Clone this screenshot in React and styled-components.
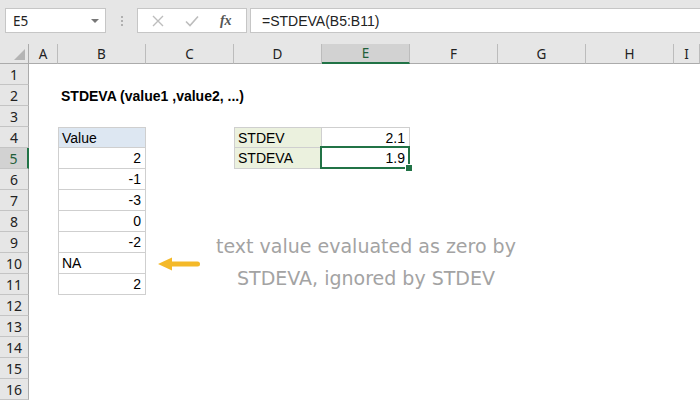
import React from 'react'
import styled, { createGlobalStyle, css } from 'styled-components'

const GlobalStyle = createGlobalStyle`
  html, body {
    margin: 0;
    padding: 0;
    background: #fff;
    overflow: hidden;
  }
  body {
    width: 700px;
    height: 400px;
    font-family: "Liberation Sans", Arial, sans-serif;
  }
`

const Window = styled.div`
  width: 700px;
  height: 400px;
  display: flex;
  flex-direction: column;
  overflow: hidden;
`

const TopBar = styled.div`
  height: 44px;
  box-sizing: border-box;
  padding: 8px 0 11px 5px;
  background: #e6e6e6;
  display: flex;
  align-items: stretch;
`

const NameBox = styled.div`
  width: 101px;
  box-sizing: border-box;
  background: #fff;
  border: 1px solid #c6c6c6;
  display: flex;
  align-items: center;
  justify-content: space-between;
  padding: 0 6px 0 7px;
  font-family: "Noto Sans", sans-serif;
  font-size: 13.5px;
  color: #222;
`

const Caret = styled.span`
  width: 0;
  height: 0;
  border-left: 4px solid transparent;
  border-right: 4px solid transparent;
  border-top: 4px solid #777;
`

const Grip = styled.div`
  width: 31px;
  display: flex;
  flex-direction: column;
  align-items: center;
  justify-content: center;
  gap: 2px;
  span {
    width: 2px;
    height: 2px;
    background: #b0b0b0;
  }
`

const FxButtons = styled.div`
  width: 110px;
  box-sizing: border-box;
  background: #fff;
  border: 1px solid #c6c6c6;
  display: flex;
  align-items: center;
  justify-content: space-around;
  padding: 0 4px;
`

const Fx = styled.span`
  font-family: "Liberation Serif", serif;
  font-style: italic;
  font-weight: bold;
  font-size: 14px;
  color: #555;
`

const FormulaInput = styled.div`
  flex: 1;
  margin-left: 3px;
  background: #fff;
  border: 1px solid #c6c6c6;
  border-right: none;
  display: flex;
  align-items: center;
  padding-left: 11px;
  font-family: "Liberation Sans", Arial, sans-serif;
  font-size: 14px;
  color: #222;
`

const Sheet = styled.div`
  flex: 1;
  display: grid;
  grid-template-columns: 29px 29px repeat(7, 88px) 1fr;
  grid-template-rows: 20px repeat(16, 21px);
  background: #fff;
`

const Corner = styled.div`
  background: #e6e6e6;
  border-right: 1px solid #ababab;
  border-bottom: 1px solid #ababab;
  display: flex;
  align-items: flex-end;
  justify-content: flex-end;
  padding: 0 3px 3px 0;
`

const ColHead = styled.div`
  background: ${p => (p.$active ? '#d2d2d2' : '#e6e6e6')};
  border-right: 1px solid #bcbcbc;
  border-bottom: ${p => (p.$active ? '2px solid #217346' : '1px solid #ababab')};
  display: flex;
  align-items: center;
  justify-content: center;
  font-family: "Noto Sans", sans-serif;
  font-size: 13.5px;
  color: ${p => (p.$active ? '#1f5f3a' : '#222')};
`

const RowHead = styled.div`
  background: ${p => (p.$active ? '#d2d2d2' : '#e6e6e6')};
  border-bottom: 1px solid #c4c4c4;
  border-right: ${p => (p.$active ? '2px solid #217346' : '1px solid #ababab')};
  box-sizing: border-box;
  display: flex;
  align-items: center;
  justify-content: center;
  font-family: "Noto Sans", sans-serif;
  font-size: 14px;
  color: ${p => (p.$active ? '#1f5f3a' : '#222')};
`

const Cell = styled.div`
  position: relative;
  box-sizing: border-box;
  display: flex;
  align-items: center;
  justify-content: ${p => (p.$right ? 'flex-end' : 'flex-start')};
  padding: 0 4px 0 3px;
  font-family: "Liberation Sans", Arial, sans-serif;
  font-size: 14px;
  color: #000;
  white-space: nowrap;
  background: ${p => p.$bg || 'transparent'};
  font-weight: ${p => (p.$bold ? 'bold' : 'normal')};
  ${p =>
    p.$boxed &&
    css`
      border-right: 1px solid #cfcfcf;
      border-bottom: 1px solid #cfcfcf;
    `}
  ${p => p.$top && 'border-top: 1px solid #cfcfcf;'}
  ${p => p.$left && 'border-left: 1px solid #cfcfcf;'}
  ${p =>
    p.$selected &&
    css`
      &::after {
        content: '';
        position: absolute;
        left: -2px;
        top: -2px;
        right: -1px;
        bottom: -1px;
        border: 2px solid #217346;
      }
      &::before {
        content: '';
        position: absolute;
        right: -4px;
        bottom: -4px;
        width: 6px;
        height: 6px;
        background: #217346;
        border: 1px solid #fff;
        z-index: 2;
      }
    `}
`

const Note = styled.div`
  grid-column: 5 / 8;
  grid-row: 10 / 13;
  display: flex;
  flex-direction: column;
  align-items: center;
  font-family: "DejaVu Sans", sans-serif;
  font-size: 19px;
  line-height: 32px;
  color: #a3a3a3;
  white-space: nowrap;
  margin-top: -2px;
`

const ArrowCell = styled.div`
  grid-column: 4;
  grid-row: 11;
  display: flex;
  align-items: center;
  padding-left: 12px;
`

const columns = ['A', 'B', 'C', 'D', 'E', 'F', 'G', 'H', 'I']

const blue = '#dde7f2'
const green = '#ebf1de'

const data = {
  'B2': { v: 'STDEVA (value1 ,value2, ...)', bold: true },
  'B4': { v: 'Value', bg: blue, boxed: true, top: true, left: true },
  'B5': { v: '2', right: true, boxed: true, left: true },
  'B6': { v: '-1', right: true, boxed: true, left: true },
  'B7': { v: '-3', right: true, boxed: true, left: true },
  'B8': { v: '0', right: true, boxed: true, left: true },
  'B9': { v: '-2', right: true, boxed: true, left: true },
  'B10': { v: 'NA', boxed: true, left: true },
  'B11': { v: '2', right: true, boxed: true, left: true },
  'D4': { v: 'STDEV', bg: green, boxed: true, top: true, left: true },
  'E4': { v: '2.1', right: true, boxed: true, top: true },
  'D5': { v: 'STDEVA', bg: green, boxed: true, left: true },
  'E5': { v: '1.9', right: true, boxed: true, selected: true },
}

const rows = Array.from({ length: 16 }, (_, i) => i + 1)

// cells covered by the arrow and the note
const covered = (c, r) =>
  (c === 'C' && r === 10) || (['D', 'E', 'F'].includes(c) && r >= 9 && r <= 11)

const App = () => (
  <Window>
    <GlobalStyle />
    <TopBar>
      <NameBox>
        E5
        <Caret />
      </NameBox>
      <Grip>
        <span />
        <span />
        <span />
      </Grip>
      <FxButtons>
        <svg width="12" height="12" viewBox="0 0 12 12">
          <path d="M1 1 L11 11 M11 1 L1 11" stroke="#bdbdbd" strokeWidth="1.4" fill="none" />
        </svg>
        <svg width="14" height="12" viewBox="0 0 14 12">
          <path d="M1 6.5 L5 10.5 L13 1.5" stroke="#bdbdbd" strokeWidth="1.6" fill="none" />
        </svg>
        <Fx>fx</Fx>
      </FxButtons>
      <FormulaInput>=STDEVA(B5:B11)</FormulaInput>
    </TopBar>
    <Sheet>
      <Corner>
        <svg width="11" height="11" viewBox="0 0 11 11">
          <path d="M11 0 L11 11 L0 11 Z" fill="#b4b4b4" />
        </svg>
      </Corner>
      {columns.map(c => (
        <ColHead key={c} $active={c === 'E'}>
          {c}
        </ColHead>
      ))}
      {rows.map(r => (
        <React.Fragment key={r}>
          <RowHead $active={r === 5}>{r}</RowHead>
          {columns.map(c => {
            if (covered(c, r)) return null
            const d = data[c + r]
            return d ? (
              <Cell
                key={c}
                $bold={d.bold}
                $bg={d.bg}
                $right={d.right}
                $boxed={d.boxed}
                $top={d.top}
                $left={d.left}
                $selected={d.selected}
              >
                {d.v}
              </Cell>
            ) : (
              <Cell key={c} />
            )
          })}
        </React.Fragment>
      ))}
      <ArrowCell>
        <svg width="42" height="14" viewBox="0 0 42 14">
          <path d="M14 7 L39.5 7" stroke="#f4b929" strokeWidth="5" strokeLinecap="round" />
          <path d="M0 7 L14 0.5 L14 13.5 Z" fill="#f4b929" />
        </svg>
      </ArrowCell>
      <Note>
        <span>text value evaluated as zero by</span>
        <span>STDEVA, ignored by STDEV</span>
      </Note>
    </Sheet>
  </Window>
)

export default App
